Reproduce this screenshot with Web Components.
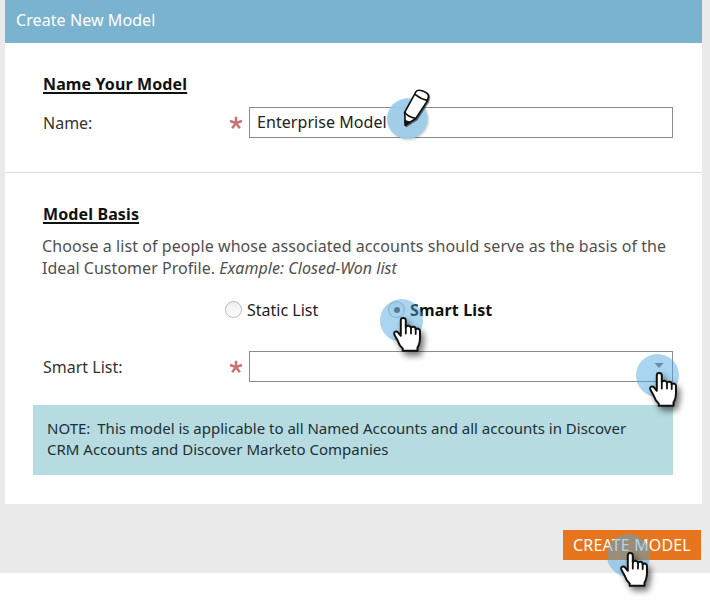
<!DOCTYPE html>
<html lang="en">
<head>
<meta charset="utf-8">
<title>Create New Model</title>
<style>
body{margin:0;min-height:600px;background:#fff;font-family:"Noto Sans","Open Sans",sans-serif}
</style>
</head>
<body>
<model-dialog></model-dialog>
<script>
const define=(name,html)=>customElements.define(name,class extends HTMLElement{
  constructor(){
    super();
    const t=document.createElement('template');
    t.innerHTML=html;
    this.attachShadow({mode:'open'}).append(t.content.cloneNode(true));
  }
});

define('section-title',`<style>
:host{display:block;font-weight:700;font-size:16px;letter-spacing:.12px;line-height:22px;color:#111;text-decoration:underline;text-decoration-thickness:2px;text-underline-offset:2px;white-space:nowrap}
</style><slot></slot>`);

define('form-field',`<style>
:host{display:grid;grid-template-columns:186px 20px 424px;height:31px;align-items:center;font-size:16px;color:#333;white-space:nowrap}
.box{box-sizing:border-box;height:31px;border:1px solid #8b8b8b;padding:0 7px;display:flex;align-items:center;background:#fff;line-height:28px;position:relative;color:#222;letter-spacing:.06px}
::slotted(span){margin-top:-1px}
svg{display:block}
</style><span class="label"><slot name="label"></slot></span>
<svg width="14" height="14" viewBox="-7 -7 14 14" fill="none" stroke="#cb7373" stroke-width="2.5"><path d="M0 0V-6.2M0 0L-6-2M0 0L6-2M0 0L-3.8 5.3M0 0L3.8 5.3"/></svg>
<div class="box"><slot></slot></div>`);

define('drop-arrow',`<style>
:host{display:block;margin-left:auto;width:12px;height:10px}svg{display:block}
</style><svg width="12" height="10"><path d="M1.5 1H10.5L6 6Z" fill="#777"/></svg>`);

define('radio-option',`<style>
:host{display:flex;align-items:center;gap:5px;font-size:16px;line-height:22px;color:#222;white-space:nowrap}
:host([checked]){font-weight:700;color:#111;letter-spacing:.15px;margin-left:-1px}
i{box-sizing:border-box;width:17px;height:17px;margin-top:-1px;border:1px solid #b9b9b9;border-radius:50%;background:linear-gradient(#eee,#fff);display:grid;place-items:center}
:host([checked]) i::after{content:"";width:6px;height:6px;border-radius:50%;background:#555}
</style><i></i><span><slot></slot></span>`);

define('note-box',`<style>
:host{display:block;box-sizing:border-box;width:640px;height:70px;padding:13px 14px;background:#b6dbe1;font-size:15px;line-height:21px;color:#1d3033;white-space:nowrap}
</style><slot></slot>`);

define('action-button',`<style>
:host{display:flex;box-sizing:border-box;width:138px;height:30px;align-items:center;justify-content:center;background:#e7751d;color:#fff;font-size:16px;letter-spacing:.15px;white-space:nowrap}
</style><span><slot></slot></span>`);

define('hand-pointer',`<style>
:host{position:absolute;width:60px;height:66px;pointer-events:none}
svg{display:block;overflow:visible}
.h{filter:drop-shadow(3px 4px 3px rgba(0,0,0,.55))}
</style><svg width="60" height="66">
<circle cx="21.5" cy="21.5" r="21.5" fill="#4ca7df" fill-opacity=".48"/>
<g class="h" transform="translate(13 18)"><path d="M10 1C8.5 1 7.8 2 7.8 3.4V18.8L4.8 15.2C3.5 13.8 .7 14.6 1.2 17C2 19.8 4.6 22.3 5.5 25.5C6.3 28.3 8 30.2 9.7 31.5V33.8H24.5V30.5C26.7 27.5 27 24 27 20V14C27 11.5 24 11 22.7 12.4C22.7 9.4 19.2 9 18 10.8C17.5 8.2 13.8 8 12.8 10V3.4C12.8 2 11.5 1 10 1Z" fill="#fff" stroke="#111" stroke-width="2" stroke-linejoin="round"/><path d="M12.8 9.5V16.5M18 11V16.5M22.7 12.4V17" fill="none" stroke="#111" stroke-width="1.8" stroke-linecap="round"/></g></svg>`);

define('pencil-pointer',`<style>
:host{position:absolute;width:60px;height:66px;pointer-events:none}
svg{display:block;overflow:visible}
.c{filter:drop-shadow(3px 3px 3px rgba(0,0,0,.22))}
.p{filter:drop-shadow(3px 3px 2px rgba(0,0,0,.5))}
</style><svg width="60" height="66" viewBox="45 25 180 198">
<circle class="c" cx="112" cy="117" r="61" fill="#9bcdeb" fill-opacity=".9"/>
<g class="p" stroke="#111" stroke-width="5" stroke-linejoin="round" stroke-linecap="round"><path d="M138 36C144 26 179 38 175 52L172 64L137 117L106 136L104 98Z" fill="#fff"/><path d="M135 44C145 52 157 59 172 62M104 98C112 109 122 114 137 116" fill="none"/><path d="M105 123L119 128L106 137Z" fill="#111"/></g></svg>`);

define('model-dialog',`<style>
:host{display:block;position:relative;box-sizing:border-box;width:710px;height:573px;background:#eaeaea;padding-left:5px}
.card{width:697px;height:504px;background:#fff;display:flex;flex-direction:column}
header{height:43px;flex:none;box-sizing:border-box;background:#7ab3cf;color:#fff;font-size:16px;letter-spacing:.08px;line-height:22px;padding:9px 11px;white-space:nowrap}
.name{height:130px;flex:none;box-sizing:border-box;border-bottom:1px solid #ddd;padding:30px 38px 0}
.name form-field{margin-top:12px}
.basis{padding:30px 38px 0}
p{margin:10px 0 0 -1px;font-size:16px;line-height:22px;color:#505050;white-space:nowrap}
.l1{letter-spacing:.073px}.l2{letter-spacing:.04px}
.n1{letter-spacing:0}.gap{margin-right:3px}
.radios{display:grid;grid-template-columns:164px auto;padding-left:182px;margin-top:20px}
.basis form-field{margin-top:30px}
note-box{margin:23px 0 0 -10px}
footer{display:flex;justify-content:flex-end;padding:26px 9px 0 0}
.pen{left:385px;top:88px}.h1{left:380px;top:299px}.h2{left:636px;top:354px}.h3{left:607px;top:534px}
</style>
<div class="card">
<header><span>Create New Model</span></header>
<section class="name"><section-title>Name Your Model</section-title>
<form-field><span slot="label">Name:</span><span>Enterprise Model</span></form-field></section>
<section class="basis"><section-title>Model Basis</section-title>
<p><span class="l1">Choose a list of people whose associated accounts should serve as the basis of the</span><br><span class="l2">Ideal Customer Profile. <em>Example: Closed-Won list</em></span></p>
<div class="radios"><radio-option>Static List</radio-option><radio-option checked>Smart List</radio-option></div>
<form-field><span slot="label">Smart List:</span><drop-arrow></drop-arrow></form-field>
<note-box><span class="n1"><span class="gap">NOTE:</span> This model is applicable to all Named Accounts and all accounts in Discover</span><br><span>CRM Accounts and Discover Marketo Companies</span></note-box></section>
</div>
<footer><action-button>CREATE MODEL</action-button></footer>
<pencil-pointer class="pen"></pencil-pointer><hand-pointer class="h1"></hand-pointer><hand-pointer class="h2"></hand-pointer><hand-pointer class="h3"></hand-pointer>`);
</script>
</body>
</html>
